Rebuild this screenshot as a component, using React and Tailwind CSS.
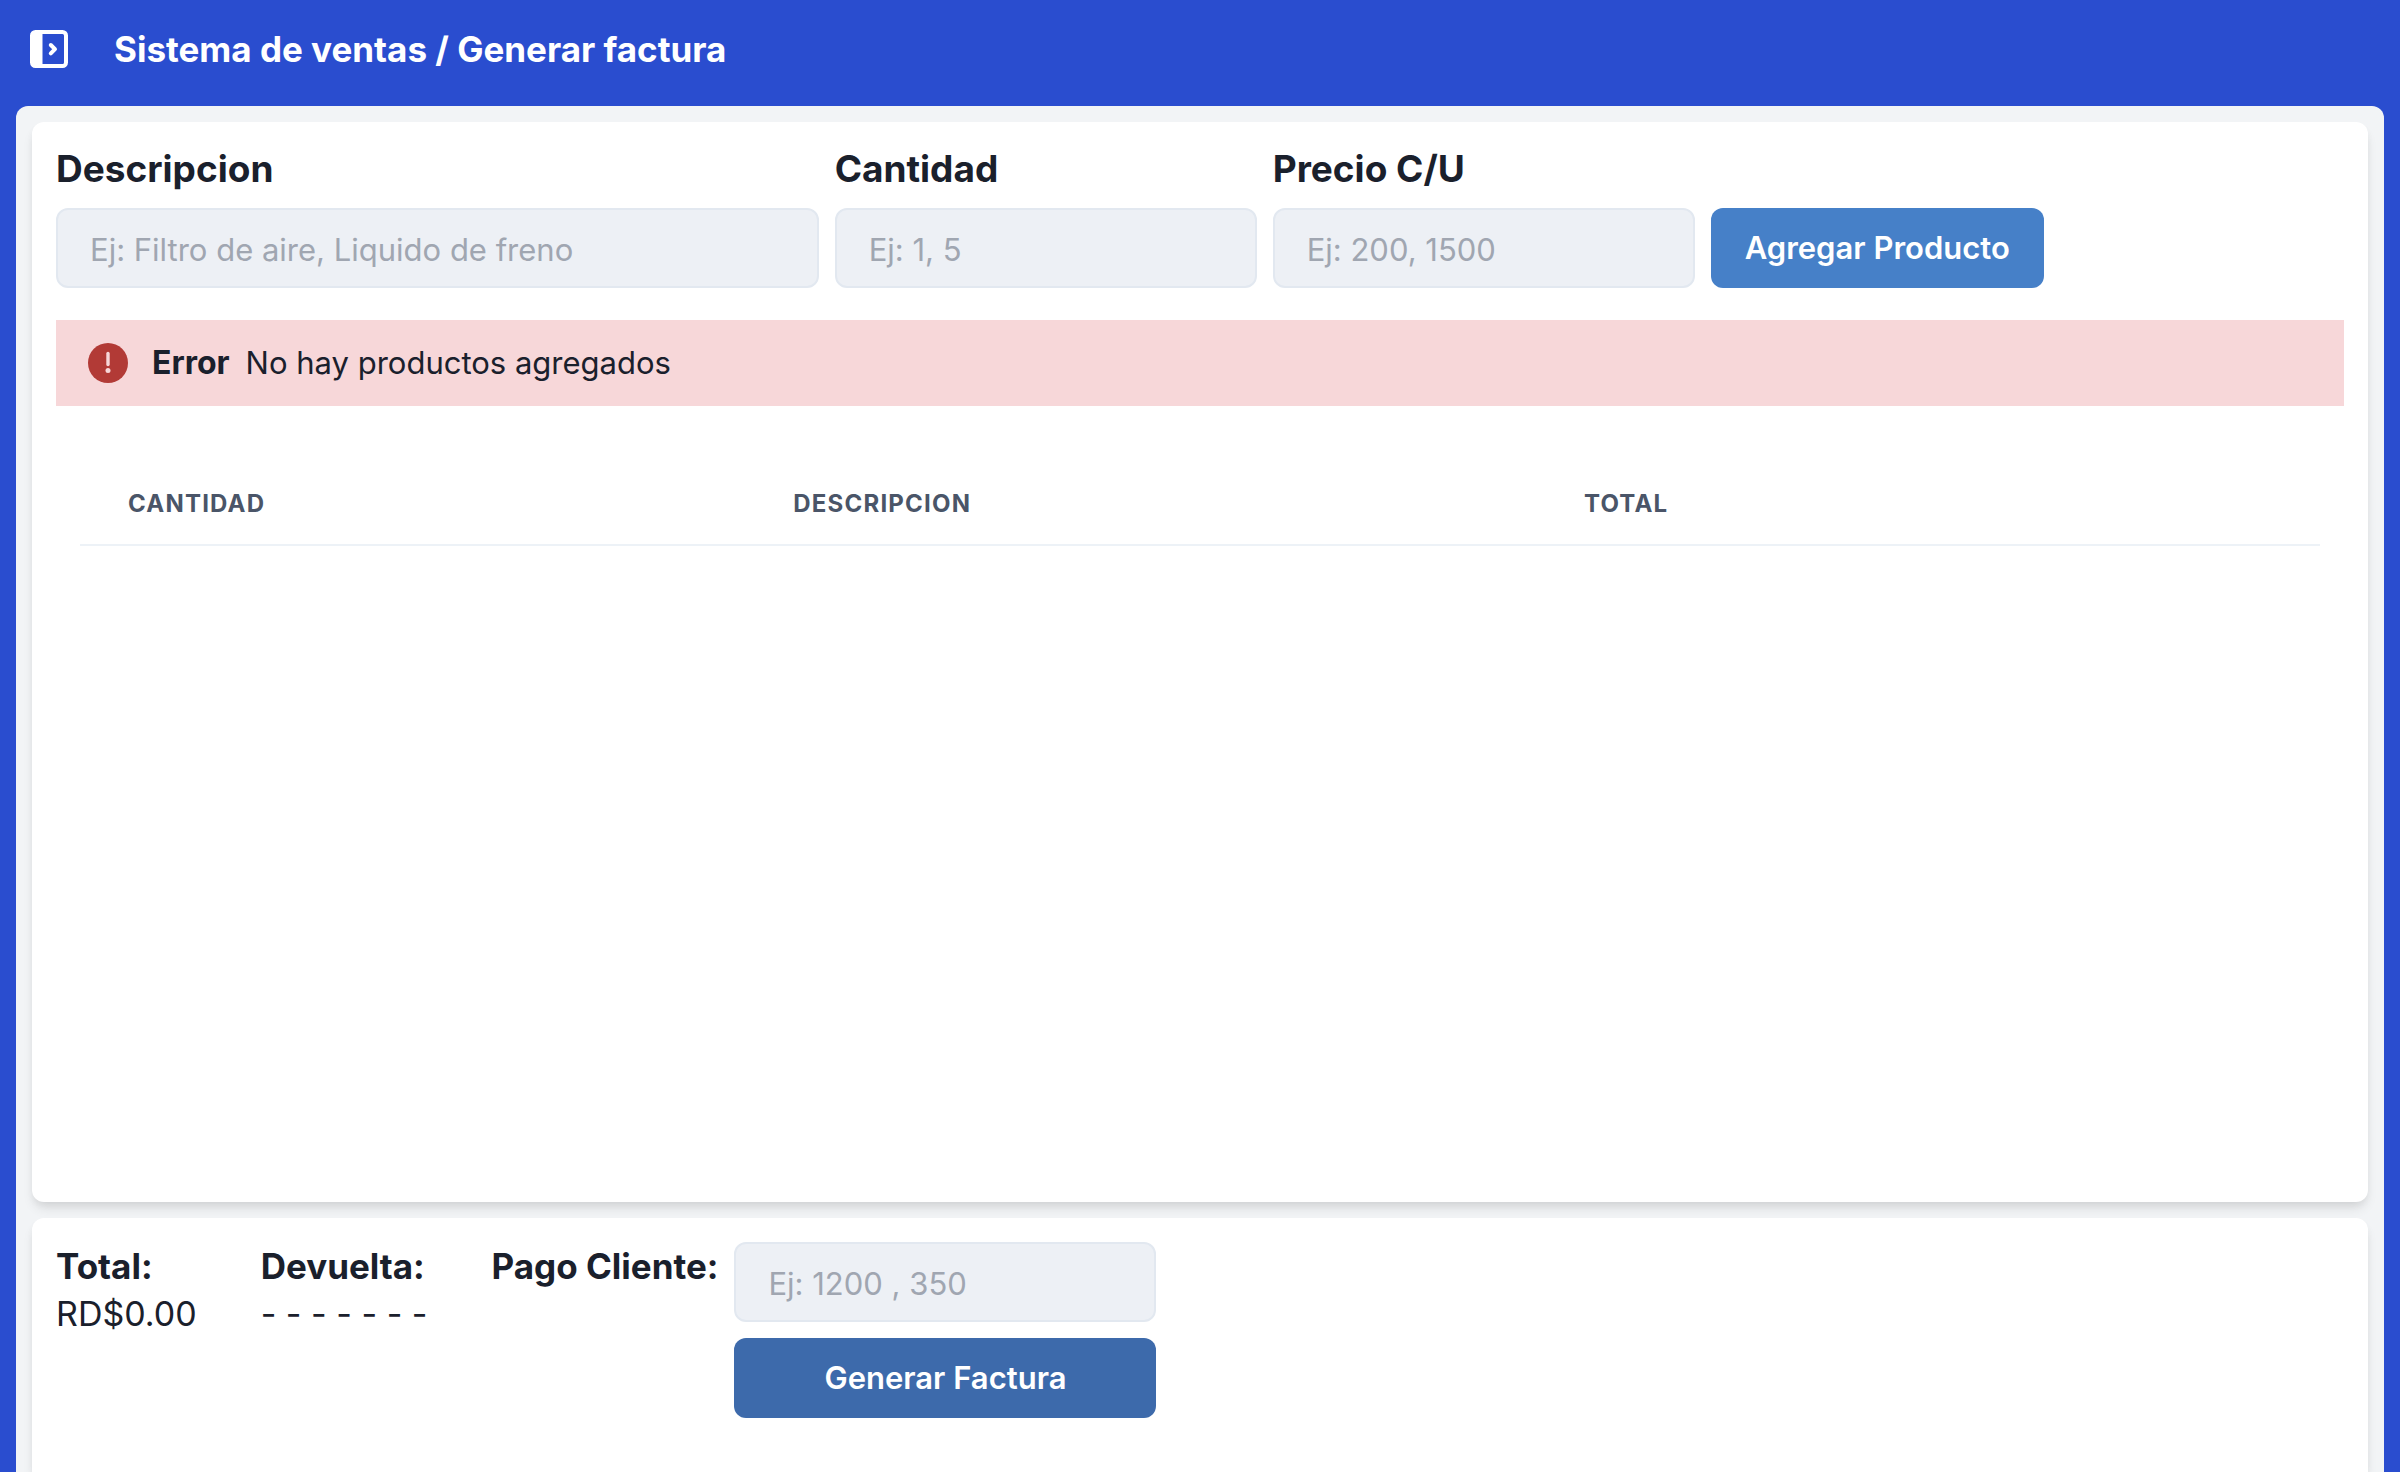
const inputClass =
  "h-20 rounded-xl border-2 border-[#e2e8f0] bg-[#edf0f5] px-8 pt-0.5 text-[31px] text-[#1a202c] placeholder:text-[#a0a6b1] outline-none";

function PanelIcon() {
  return (
    <svg width="38" height="38" viewBox="0 0 38 38" fill="none" aria-hidden="true">
      <rect x="2" y="2" width="34" height="34" rx="3.5" stroke="white" strokeWidth="4" />
      <path d="M2 2h10.5v34H2z" fill="white" />
      <path d="M20.8 15l4.2 4.2l-4.2 4.2" stroke="white" strokeWidth="4" strokeLinecap="round" strokeLinejoin="round" />
    </svg>
  );
}

function ErrorIcon() {
  return (
    <svg width="40" height="40" viewBox="0 0 40 40" className="shrink-0" aria-hidden="true">
      <circle cx="20" cy="20" r="20" fill="#b23a36" />
      <path d="M20 10.5v11" stroke="#f7d7d9" strokeWidth="3.4" strokeLinecap="round" />
      <circle cx="20" cy="27.5" r="2.5" fill="#f7d7d9" />
    </svg>
  );
}

function Field({ id, label, placeholder, className }) {
  return (
    <div className={`flex flex-col gap-4 ${className}`}>
      <label htmlFor={id} className="text-[37px] leading-[46px] font-bold">
        {label}
      </label>
      <input id={id} type="text" placeholder={placeholder} className={`w-full ${inputClass}`} />
    </div>
  );
}

export default function App() {
  return (
    <div className="flex h-screen flex-col overflow-hidden bg-[#2a4dcf] px-4 font-[Inter,sans-serif] text-[#1a202c]">
      <header className="flex h-[106px] shrink-0 items-center gap-[46px] px-3.5 pb-2 text-white">
        <button type="button" aria-label="Abrir menú">
          <PanelIcon />
        </button>
        <h1 className="text-[35px] leading-[44px] font-bold">Sistema de ventas / Generar factura</h1>
      </header>

      <main className="flex flex-1 flex-col gap-4 rounded-t-xl bg-[#f2f4f6] px-4 pt-4">
        <section className="flex-1 rounded-xl bg-white px-6 pt-6 shadow-[0_8px_12px_-2px_rgba(0,0,0,0.1),0_4px_8px_-2px_rgba(0,0,0,0.06)]">
          <form className="flex items-end gap-4">
            <Field id="descripcion" label="Descripcion" placeholder="Ej: Filtro de aire, Liquido de freno" className="w-1/3" />
            <Field id="cantidad" label="Cantidad" placeholder="Ej: 1, 5" className="w-[422px]" />
            <Field id="precio" label="Precio C/U" placeholder="Ej: 200, 1500" className="w-[422px]" />
            <button type="button" className="h-20 rounded-xl bg-[#4680c8] px-[34px] text-[31px] font-semibold text-white">
              Agregar Producto
            </button>
          </form>

          <div role="alert" className="mt-8 flex h-[86px] items-center bg-[#f7d7d9] px-8 text-[31px]">
            <ErrorIcon />
            <strong className="ml-6 text-[32px] font-bold">Error</strong>
            <span className="ml-4">No hay productos agregados</span>
          </div>

          <div className="px-6 pt-[58px]">
            <table className="w-full table-fixed text-left">
              <thead>
                <tr className="border-b-2 border-[#edf2f7] text-2xl tracking-wider text-[#4a5568] uppercase">
                  <th className="w-[29.7%] px-12 py-6 font-bold">Cantidad</th>
                  <th className="w-[35.3%] px-12 py-6 font-bold">Descripcion</th>
                  <th className="px-12 py-6 font-bold">Total</th>
                </tr>
              </thead>
              <tbody />
            </table>
          </div>
        </section>

        <section className="flex items-start rounded-t-xl bg-white px-6 pt-6 pb-[54px] shadow-[0_8px_12px_-2px_rgba(0,0,0,0.1),0_4px_8px_-2px_rgba(0,0,0,0.06)]">
          <dl className="flex gap-16 pr-16 text-[34px] leading-[48px]">
            <div>
              <dt className="text-[35px] font-bold">Total:</dt>
              <dd>RD$0.00</dd>
            </div>
            <div>
              <dt className="text-[35px] font-bold">Devuelta:</dt>
              <dd>- - - - - - -</dd>
            </div>
          </dl>
          <form className="flex items-start gap-4">
            <label htmlFor="pago" className="text-[35px] leading-[48px] font-bold">
              Pago Cliente:
            </label>
            <div className="flex w-[422px] flex-col gap-4">
              <input id="pago" type="text" placeholder="Ej: 1200 , 350" className={`w-full ${inputClass}`} />
              <button type="button" className="h-20 rounded-xl bg-[#3d6aab] text-[31px] font-semibold text-white">
                Generar Factura
              </button>
            </div>
          </form>
        </section>
      </main>
    </div>
  );
}
